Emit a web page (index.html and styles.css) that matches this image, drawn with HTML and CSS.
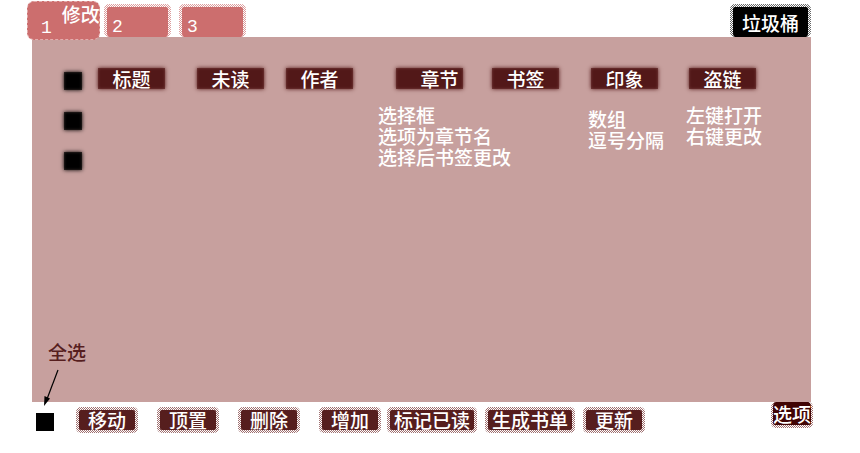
FILE: index.html
```html
<!DOCTYPE html>
<html lang="zh-CN">
<head>
<meta charset="utf-8">
<title>书签管理</title>
<link rel="stylesheet" href="styles.css">
</head>
<body>
<header class="top">
  <nav class="tabs">
    <button class="tab tab-active" type="button"><span class="num">1</span><span class="edit">修改</span></button>
    <button class="tab grain" type="button"><span class="num">2</span></button>
    <button class="tab grain" type="button"><span class="num">3</span></button>
  </nav>
  <button class="trash grain" type="button">垃圾桶</button>
</header>
<main class="panel">
  <table class="books">
    <colgroup>
      <col class="c-check"><col class="c-title"><col class="c-unread"><col class="c-author"><col class="c-chapter"><col class="c-mark"><col class="c-tags"><col>
    </colgroup>
    <thead>
      <tr>
        <th class="pick"><input class="box soft" type="checkbox" aria-label="标题行"></th>
        <th><span class="tag">标题</span></th>
        <th><span class="tag">未读</span></th>
        <th><span class="tag">作者</span></th>
        <th><span class="tag tag-chapter">章节</span></th>
        <th><span class="tag">书签</span></th>
        <th><span class="tag tag-inset">印象</span></th>
        <th><span class="tag tag-inset">盗链</span></th>
      </tr>
    </thead>
    <tbody>
      <tr>
        <td class="pick"><input class="box soft" type="checkbox" aria-label="第一行"></td>
        <td></td><td></td><td></td>
        <td colspan="2" rowspan="2">选择框<br>选项为章节名<br>选择后书签更改</td>
        <td class="note-low" rowspan="2">数组<br>逗号分隔</td>
        <td rowspan="2">左键打开<br>右键更改</td>
      </tr>
      <tr>
        <td class="pick"><input class="box soft" type="checkbox" aria-label="第二行"></td>
        <td></td><td></td><td></td>
      </tr>
    </tbody>
  </table>
  <label class="all" for="all">全选
    <svg class="arrow" width="20" height="40" viewBox="0 0 20 40" aria-hidden="true">
      <path d="M15 2 4 31" fill="none" stroke="#000" stroke-width="1.2"/>
      <path d="M1 38 1.500 28 7 30.500Z" fill="#000"/>
    </svg>
  </label>
</main>
<footer class="bottom">
  <input class="box" type="checkbox" id="all">
  <div class="actions">
    <button class="act grain" type="button">移动</button>
    <button class="act grain" type="button">顶置</button>
    <button class="act grain" type="button">删除</button>
    <button class="act grain" type="button">增加</button>
  </div>
  <div class="actions actions-tight">
    <button class="act act-wide grain" type="button">标记已读</button>
    <button class="act act-wide grain" type="button">生成书单</button>
    <button class="act grain" type="button">更新</button>
  </div>
  <button class="options grain" type="button">选项</button>
</footer>
</body>
</html>
```
FILE: styles.css
```css
* {
  box-sizing: border-box;
}

body {
  margin: 0;
  padding: 0 49px 0 32px;
  background: #fff;
  color: #fff;
  font: 500 19px/21px "Noto Sans CJK SC", sans-serif;
}

button {
  margin: 0;
  padding: 0;
  border: 0;
  color: inherit;
  font: inherit;
  white-space: nowrap;
}

/* solid core with a checkered fringe that thins out to the edge */
.grain {
  --ink: #561e1e;
  --fringe: #a07070;
  border: 3px solid transparent;
  border-radius: 5px;
  background:
    linear-gradient(var(--ink), var(--ink)) padding-box,
    repeating-conic-gradient(var(--fringe) 0 25%, #fff 0 50%) 0 0 / 2px 2px border-box;
}

.top {
  display: flex;
  align-items: flex-end;
  justify-content: space-between;
  height: 37px;
}

.tabs {
  display: flex;
  align-items: flex-end;
  gap: 8px;
  margin-left: -5px;
}

.tab {
  --ink: #cc6e6e;
  --fringe: #dc9c9c;
  display: flex;
  align-items: flex-end;
  width: 67px;
  height: 33px;
  padding: 0 0 1px 5px;
  border-bottom: 0;
}

.tab-active {
  position: relative;
  z-index: 1;
  width: 73px;
  height: 39px;
  margin: 0 -4px -3px 0;
  padding: 1px 0 2px 13px;
  border: 1px dashed #e3adad;
  border-radius: 7px;
  background: #cc6e6e;
  gap: 10px;
}

.num {
  font: 18px/18px "Liberation Mono", monospace;
}

.edit {
  align-self: flex-start;
}

.trash {
  --ink: #000;
  --fringe: #666;
  width: 81px;
  height: 33px;
  border-bottom: 0;
}

.panel {
  display: flex;
  flex-direction: column;
  min-height: calc(100vh - 88px);
  padding: 31px 0 40px 32px;
  background: #c7a09e;
}

.books {
  width: 100%;
  table-layout: fixed;
  border-collapse: collapse;
}

.c-check { width: 34px; }
.c-title { width: 99px; }
.c-unread { width: 89px; }
.c-author { width: 92px; }
.c-chapter { width: 114px; }
.c-mark { width: 96px; }
.c-tags { width: 98px; }

th,
td {
  padding: 0;
  font-weight: 500;
  text-align: left;
  vertical-align: top;
  white-space: nowrap;
}

thead tr {
  height: 36px;
}

tbody tr {
  height: 40px;
}

.tag {
  display: block;
  width: 67px;
  background: #521818;
  box-shadow: 0 0 4px #521818, inset 0 0 3px #7c4645;
  text-align: center;
}

.tag-chapter {
  margin-left: 18px;
  padding-left: 20px;
}

.tag-inset {
  margin-left: 3px;
}

.note-low {
  padding-top: 4px;
}

.box {
  display: block;
  flex: none;
  appearance: none;
  width: 18px;
  height: 18px;
  margin: 0;
  background: #000;
}

.soft {
  box-shadow: 0 0 4px #000, inset 0 0 3px #443634;
}

.pick {
  padding-top: 8px;
}

thead .pick {
  padding-top: 4px;
}

.all {
  position: relative;
  align-self: flex-start;
  margin: auto 0 0 -16px;
  color: #561e1e;
}

.arrow {
  position: absolute;
  top: 27px;
  left: -5px;
}

.bottom {
  display: flex;
  align-items: flex-start;
  padding-left: 4px;
}

.bottom .box {
  margin: 11px 22px 0 0;
}

.actions {
  display: flex;
  gap: 19px;
  margin: 5px 6px 0 0;
}

.actions-tight {
  gap: 8px;
}

.act {
  width: 62px;
  height: 26px;
  line-height: 18px;
}

.act-wide {
  width: 90px;
}

.options {
  --ink: #400404;
  width: 42px;
  height: 26px;
  margin: 0 -2px 0 auto;
  border-width: 0 2px 3px;
}
```
